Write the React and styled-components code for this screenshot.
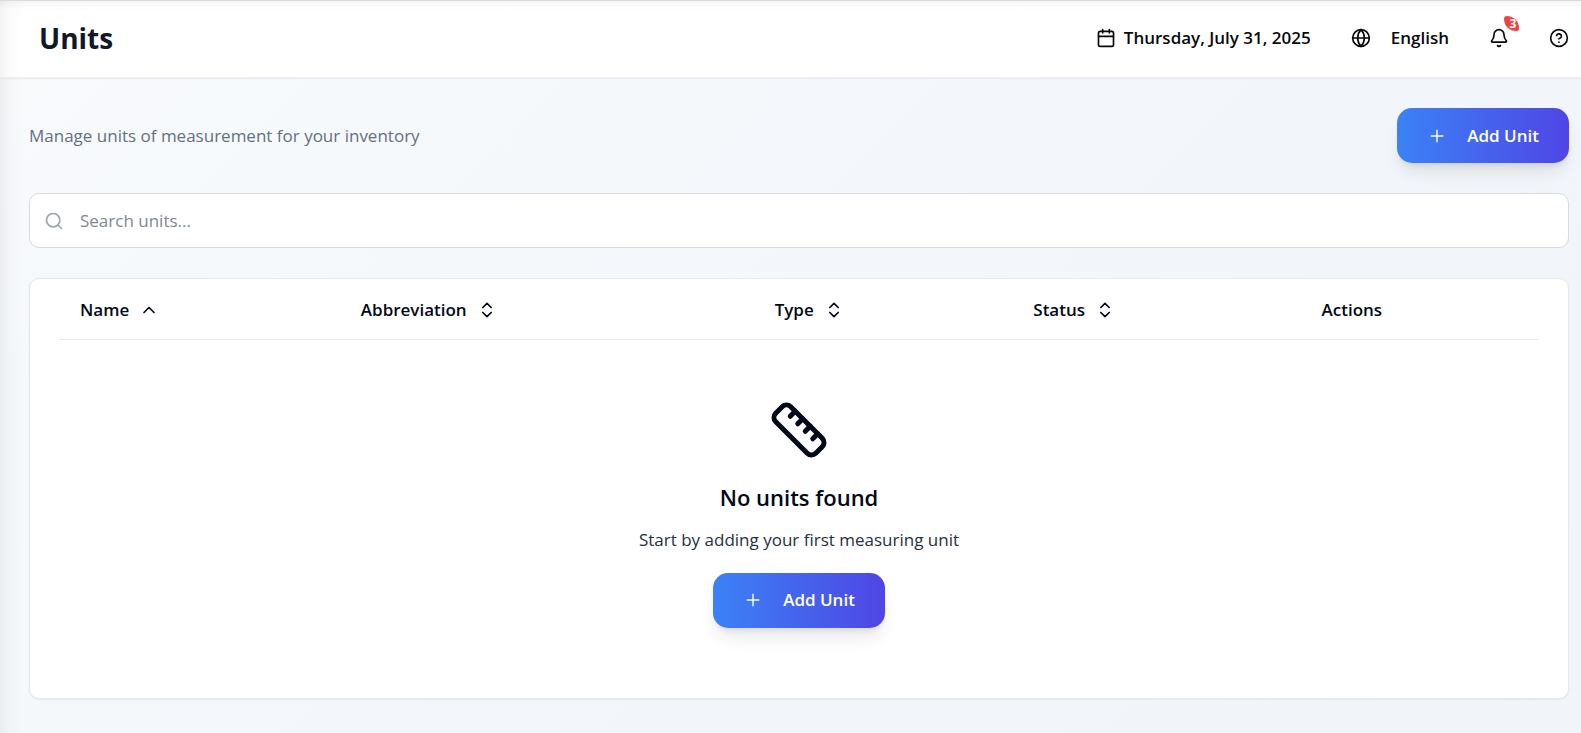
import React from "react";
import styled, { createGlobalStyle } from "styled-components";
import {
  Bell,
  Calendar,
  ChevronUp,
  ChevronsUpDown,
  CircleHelp,
  Globe,
  Plus,
  Ruler,
  Search,
} from "lucide-react";

const GlobalStyle = createGlobalStyle`
  *, *::before, *::after { box-sizing: border-box; }
  body {
    margin: 0;
    font-family: "Segoe UI", "Open Sans", "Noto Sans", sans-serif;
    font-size: 17px;
    line-height: 24px;
    color: #020817;
  }
  button, input { font: inherit; color: inherit; }
  h1, h2, p { margin: 0; }
`;

const edgeShade =
  "linear-gradient(to right, rgba(15, 15, 30, 0.05), rgba(15, 15, 30, 0.02) 9px, transparent 24px)";

const Page = styled.div`
  display: flex;
  flex-direction: column;
  min-height: 100vh;
  background: ${edgeShade},
    linear-gradient(135deg, #f8fafc 0%, #f3f7fb 50%, #f1f5f9 100%);
`;

const Header = styled.header`
  display: flex;
  align-items: center;
  justify-content: space-between;
  height: 78px;
  padding: 0 12px 2px 39px;
  border-top: 1px solid #d9d9d9;
  border-bottom: 1px solid #eceef1;
  background: ${edgeShade}, linear-gradient(#f5f5f5, #ffffff 9px);
  box-shadow: 0 1px 2px rgba(0, 0, 0, 0.05);
`;

const Title = styled.h1`
  font-size: 28px;
  line-height: 36px;
  font-weight: 700;
  color: #111827;
`;

const Tools = styled.div`
  display: flex;
  align-items: center;
  gap: 40px;
  color: #09090b;
`;

const DateLabel = styled.div`
  display: flex;
  align-items: center;
  gap: 8px;
  font-weight: 600;
`;

const ToolButton = styled.button`
  position: relative;
  display: flex;
  align-items: center;
  gap: 20px;
  padding: 0;
  border: 0;
  background: none;
  font-weight: 600;
  cursor: pointer;
`;

const Badge = styled.span`
  position: absolute;
  top: -12px;
  right: -10px;
  width: 15px;
  height: 15px;
  padding-left: 3px;
  border-radius: 3px 12px 2px 12px;
  background: #ef4444;
  color: #ffffff;
  font-size: 12px;
  font-weight: 700;
  line-height: 15px;
  text-align: center;
`;

const Main = styled.main`
  display: flex;
  flex-direction: column;
  gap: 30px;
  padding: 30px 12px 30px 29px;
`;

const Intro = styled.div`
  display: flex;
  align-items: center;
  justify-content: space-between;
`;

const Lead = styled.p`
  color: #64707f;
`;

const PrimaryButton = styled.button`
  display: inline-flex;
  align-items: center;
  gap: 20px;
  height: 55px;
  padding: 0 30px;
  border: 0;
  border-radius: 15px;
  background: linear-gradient(to right, #3b82f6, #4f46e5);
  box-shadow: 0 12px 18px -4px rgba(0, 0, 0, 0.1),
    0 5px 7px -4px rgba(0, 0, 0, 0.1);
  color: #ffffff;
  font-weight: 600;
  cursor: pointer;
`;

const SearchBox = styled.label`
  display: flex;
  align-items: center;
  gap: 16px;
  height: 55px;
  padding: 0 14px;
  border: 1px solid #d7dbe0;
  border-radius: 10px;
  background: #ffffff;
  color: #9ca3af;
`;

const SearchInput = styled.input`
  flex: 1;
  min-width: 0;
  padding: 0;
  border: 0;
  outline: 0;
  background: none;
  color: #020817;
  &::placeholder { color: #808791; opacity: 1; }
`;

const Card = styled.section`
  padding: 0 30px 70px;
  border: 1px solid #e5e8ed;
  border-radius: 10px;
  background: #ffffff;
  box-shadow: 0 1px 2px rgba(0, 0, 0, 0.06);
`;

const Table = styled.table`
  width: 100%;
  table-layout: fixed;
  border-collapse: collapse;
  border-bottom: 1px solid #e5e7eb;
`;

const HeadCell = styled.th`
  width: ${({ $width }) => $width};
  height: 60px;
  padding: 2px 20px 0;
  text-align: left;
  font-weight: 600;
`;

const SortButton = styled.button`
  display: inline-flex;
  align-items: center;
  gap: 10px;
  padding: 0;
  border: 0;
  background: none;
  font-weight: 600;
  vertical-align: middle;
  cursor: pointer;
`;

const Empty = styled.div`
  display: flex;
  flex-direction: column;
  align-items: center;
  padding-top: 60px;
  text-align: center;
`;

const EmptyTitle = styled.h2`
  margin-top: 19px;
  font-size: 22px;
  line-height: 36px;
  font-weight: 600;
`;

const EmptyText = styled.p`
  margin: 13px 0 21px;
  color: #27303f;
`;

const columns = [
  { label: "Name", width: "19%", sort: "asc" },
  { label: "Abbreviation", width: "28%", sort: "none" },
  { label: "Type", width: "17.5%", sort: "none" },
  { label: "Status", width: "19.5%", sort: "none" },
  { label: "Actions", width: "16%" },
];

function AddUnitButton() {
  return (
    <PrimaryButton type="button">
      <Plus size={20} strokeWidth={1.6} aria-hidden="true" />
      Add Unit
    </PrimaryButton>
  );
}

export default function App() {
  return (
    <Page>
      <GlobalStyle />
      <Header>
        <Title>Units</Title>
        <Tools>
          <DateLabel>
            <Calendar size={20} aria-hidden="true" />
            <time dateTime="2025-07-31">Thursday, July 31, 2025</time>
          </DateLabel>
          <ToolButton type="button">
            <Globe size={20} aria-hidden="true" />
            English
          </ToolButton>
          <ToolButton type="button" aria-label="Notifications">
            <Bell size={20} aria-hidden="true" />
            <Badge>3</Badge>
          </ToolButton>
          <ToolButton type="button" aria-label="Help">
            <CircleHelp size={20} aria-hidden="true" />
          </ToolButton>
        </Tools>
      </Header>
      <Main>
        <Intro>
          <Lead>Manage units of measurement for your inventory</Lead>
          <AddUnitButton />
        </Intro>
        <SearchBox>
          <Search size={20} aria-hidden="true" />
          <SearchInput type="text" placeholder="Search units..." aria-label="Search units" />
        </SearchBox>
        <Card>
          <Table>
            <thead>
              <tr>
                {columns.map(({ label, width, sort }) => (
                  <HeadCell key={label} scope="col" $width={width}>
                    {sort ? (
                      <SortButton type="button">
                        {label}
                        {sort === "asc" ? (
                          <ChevronUp size={20} aria-hidden="true" />
                        ) : (
                          <ChevronsUpDown size={20} aria-hidden="true" />
                        )}
                      </SortButton>
                    ) : (
                      label
                    )}
                  </HeadCell>
                ))}
              </tr>
            </thead>
          </Table>
          <Empty>
            <Ruler size={60} aria-hidden="true" />
            <EmptyTitle>No units found</EmptyTitle>
            <EmptyText>Start by adding your first measuring unit</EmptyText>
            <AddUnitButton />
          </Empty>
        </Card>
      </Main>
    </Page>
  );
}
